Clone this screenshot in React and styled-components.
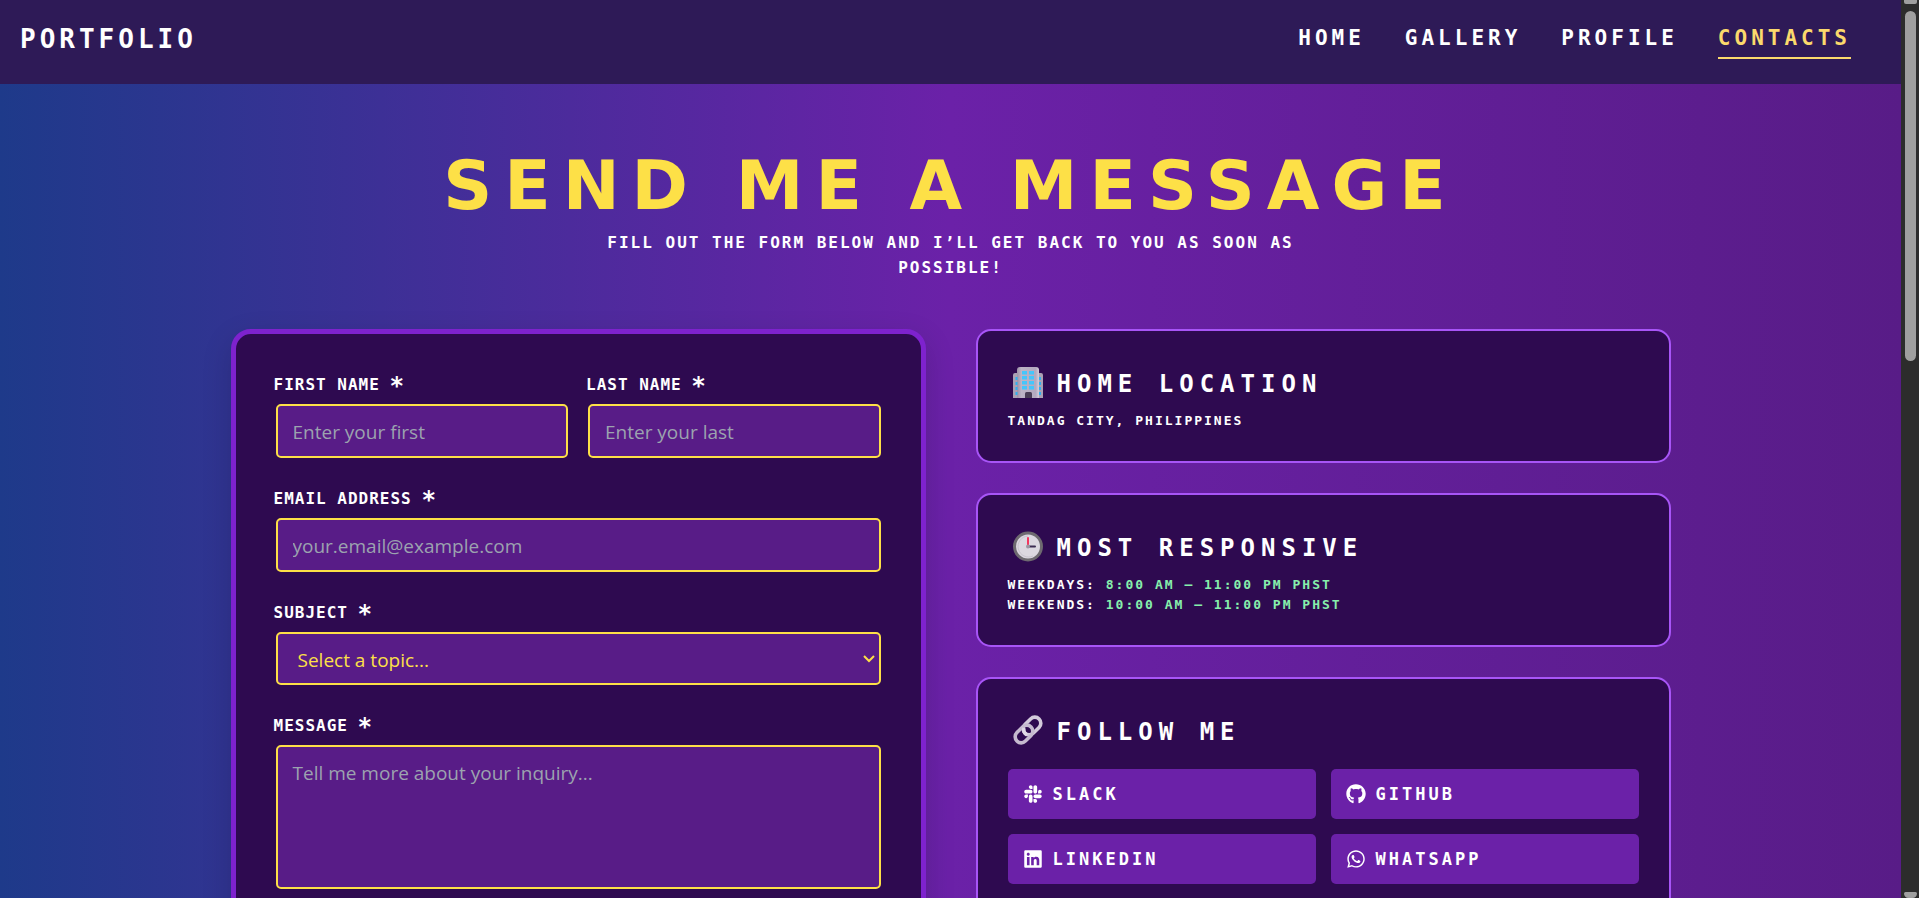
import React from "react";
import styled, { createGlobalStyle } from "styled-components";
import { FaSlack, FaGithub, FaLinkedin, FaWhatsapp } from "react-icons/fa";

const pixel = `"DejaVu Sans Mono", "Liberation Mono", monospace`;
const display = `"DejaVu Sans", "Liberation Sans", sans-serif`;
const body = `"Open Sans", "Noto Sans", sans-serif`;

const GlobalStyle = createGlobalStyle`
  *, *::before, *::after { box-sizing: border-box; }
  html, body { margin: 0; background: #2c2c2c; }
  h1, h2, p { margin: 0; }
`;

const Screen = styled.div`
  display: flex;
  height: 100vh;
  overflow: hidden;
  font-family: ${pixel};
  font-weight: 700;
  text-transform: uppercase;
  color: #fff;
`;

const Page = styled.div`
  flex: 1;
  min-width: 0;
  overflow: hidden;
  background: linear-gradient(to right, #1e3a8a, #6b21a8, #581c87);
`;

const Header = styled.header`
  display: flex;
  justify-content: space-between;
  align-items: flex-start;
  height: 84px;
  padding: 20px 50px 0 20px;
  background: #2e1a57;
`;

const Logo = styled.a`
  font-size: 26px;
  line-height: 38px;
  letter-spacing: 4px;
  color: #fff;
  text-decoration: none;
`;

const Nav = styled.nav`
  display: flex;
  gap: 40px;
`;

const NavLink = styled.a`
  padding-bottom: 1px;
  border-bottom: 2px solid ${(p) => (p.$active ? "#fbd96c" : "transparent")};
  font-size: 21px;
  line-height: 36px;
  letter-spacing: 4px;
  color: ${(p) => (p.$active ? "#fbd96c" : "#fff")};
  text-decoration: none;
`;

const Main = styled.main`
  max-width: 1480px;
  margin: 0 auto;
  padding: 62px 20px;
`;

const Intro = styled.section`
  display: flex;
  flex-direction: column;
  align-items: center;
  gap: 4px;
  margin-bottom: 49px;
  text-align: center;
`;

const Title = styled.h1`
  font-family: ${display};
  font-size: 68px;
  line-height: 80px;
  letter-spacing: 12px;
  color: #fde047;
`;

const Subtitle = styled.p`
  max-width: 720px;
  font-size: 16px;
  line-height: 25px;
  letter-spacing: 2px;
`;

const Columns = styled.div`
  display: grid;
  grid-template-columns: 1fr 1fr;
  gap: 50px;
`;

const Form = styled.form`
  display: flex;
  flex-direction: column;
  gap: 24px;
  padding: 36px 38px;
  border: 5px solid #7e22ce;
  border-radius: 20px;
  background: #2e0a50;
  box-shadow: 0 10px 30px rgba(0, 0, 0, 0.15);
`;

const NameRow = styled.div`
  display: grid;
  grid-template-columns: 1fr 1fr;
  gap: 16px;
`;

const Field = styled.div`
  display: flex;
  flex-direction: column;
  gap: 2px;
`;

const Label = styled.label`
  font-size: 16px;
  line-height: 30px;
  letter-spacing: 1px;
`;

const Required = styled.span`
  font-family: ${display};
  font-size: 24px;
  line-height: 1px;
  vertical-align: -4px;
`;

const controlStyle = `
  display: block;
  min-width: 0;
  margin: 2px;
  border: 2px solid #fde047;
  border-radius: 5px;
  background: #581c87;
  color: #fde047;
  font-family: ${body};
  font-size: 19px;
  outline: none;
  &::placeholder { color: #9ca3af; opacity: 1; }
`;

const Input = styled.input`
  ${controlStyle}
  height: 54px;
  padding: 2px 15px 0;
`;

const Textarea = styled.textarea`
  ${controlStyle}
  height: 144px;
  padding: 12px 15px;
  line-height: 28px;
  resize: none;
`;

const SelectWrap = styled.div`
  display: grid;
  align-items: center;
  & > * { grid-area: 1 / 1; }
`;

const Select = styled.select`
  ${controlStyle}
  height: 53px;
  padding: 2px 20px 0;
  appearance: none;
`;

const Chevron = styled.svg`
  width: 12px;
  height: 8px;
  margin-right: 8px;
  justify-self: end;
  pointer-events: none;
`;

const Aside = styled.aside`
  display: flex;
  flex-direction: column;
  gap: 30px;
`;

const Card = styled.section`
  padding: 30px;
  border: 2px solid #a855f7;
  border-radius: 15px;
  background: #2e0a50;
`;

const CardTitle = styled.h2`
  display: flex;
  align-items: center;
  gap: 14px;
  height: 46px;
  padding-left: 5px;
  font-size: 24px;
  letter-spacing: 6px;
`;

const CardIcon = styled.svg`
  flex: none;
  width: 30px;
  height: 34px;
`;

const CardText = styled.p`
  margin-top: 4px;
  font-size: 13px;
  line-height: 20px;
  letter-spacing: 2px;
`;

const Line = styled.span`
  display: block;
`;

const Hours = styled.span`
  color: #86efac;
`;

const Socials = styled.div`
  display: grid;
  grid-template-columns: 1fr 1fr;
  gap: 15px;
  margin-top: 14px;
`;

const SocialLink = styled.a`
  display: flex;
  align-items: center;
  gap: 10px;
  height: 50px;
  padding: 0 15px;
  border-radius: 5px;
  background: #6b21a8;
  color: #fff;
  font-size: 17px;
  letter-spacing: 3px;
  text-decoration: none;
  & > svg { flex: none; width: 20px; height: 20px; }
`;

const Scrollbar = styled.div`
  display: flex;
  flex-direction: column;
  align-items: center;
  justify-content: space-between;
  width: 18px;
  background: #2c2c2c;
`;

const Thumb = styled.div`
  width: 11px;
  height: 39%;
  margin: 7px 0 auto;
  border-radius: 6px;
  background: #9f9f9f;
`;

const ScrollArrow = styled.div`
  width: 13px;
  height: ${(p) => (p.$down ? 6 : 4)}px;
  border-radius: ${(p) => (p.$down ? "2px 2px 6px 6px" : "0 0 2px 2px")};
  background: #9f9f9f;
`;

function BuildingIcon() {
  const rows = [4, 9, 14, 19];
  return (
    <CardIcon viewBox="0 0 30 34" aria-hidden="true">
      <defs>
        <linearGradient id="wall" x1="0" x2="1">
          <stop offset="0" stopColor="#9c92a6" />
          <stop offset="0.2" stopColor="#bdb4c6" />
          <stop offset="0.85" stopColor="#b3a9bf" />
          <stop offset="1" stopColor="#d5cfdb" />
        </linearGradient>
      </defs>
      <path d="M0 8a2 2 0 0 1 2-2h3v25H0zM25 6h3a2 2 0 0 1 2 2v23h-5z" fill="#aaa1b4" />
      <path d="M4 3a3 3 0 0 1 3-3h16a3 3 0 0 1 3 3v28H4z" fill="url(#wall)" />
      {rows.map((y) => (
        <g key={y} fill="#44c6fb">
          <path d={`M9 ${y}h5v3.5H9zM16 ${y}h5v3.5h-5z`} />
          <path d={`M2.5 ${y + 6}h2v3h-2zM26 ${y + 6}h2v3h-2z`} fill="#2fb0ee" />
        </g>
      ))}
      <path d="M12 31v-4.500a1.500 1.500 0 0 1 1.500-1.500h4a1.500 1.500 0 0 1 1.500 1.500V31z" fill="#493d55" />
    </CardIcon>
  );
}

function ClockIcon() {
  return (
    <CardIcon viewBox="0 0 30 34" aria-hidden="true">
      <circle cx="15" cy="15.500" r="15" fill="#6e6a70" />
      <circle cx="15" cy="15.500" r="12" fill="#dcd8e0" />
      <path d="M15 5a10.500 10.500 0 1 0 5 20" fill="none" stroke="#c9c4ce" strokeWidth="1" />
      <path d="M15 15.500V7" stroke="#f4365f" strokeWidth="2" strokeLinecap="round" />
      <path d="M15 15.500h7" stroke="#3c2d52" strokeWidth="2" strokeLinecap="round" />
      <circle cx="15" cy="15.500" r="2" fill="#9c96a3" />
    </CardIcon>
  );
}

function LinkIcon() {
  return (
    <CardIcon viewBox="0 0 30 34" aria-hidden="true">
      <g fill="none" strokeWidth="3.600">
        <rect x="-10" y="-6" width="20" height="12" rx="6" transform="translate(19 11) rotate(-45)" stroke="#d3cadb" />
        <rect x="-10" y="-6" width="20" height="12" rx="6" transform="translate(11 19) rotate(-45)" stroke="#c5bacf" />
        <path d="M11 13a6 6 0 0 0 3 7" stroke="#e0d9e6" />
      </g>
    </CardIcon>
  );
}

const socials = [
  ["Slack", FaSlack],
  ["GitHub", FaGithub],
  ["LinkedIn", FaLinkedin],
  ["WhatsApp", FaWhatsapp],
];

const links = ["Home", "Gallery", "Profile", "Contacts"];

function FieldLabel({ htmlFor, children }) {
  return (
    <Label htmlFor={htmlFor}>
      {children} <Required>*</Required>
    </Label>
  );
}

export default function App() {
  return (
    <Screen>
      <GlobalStyle />
      <Page>
        <Header>
          <Logo href="#home">Portfolio</Logo>
          <Nav>
            {links.map((name) => (
              <NavLink key={name} href={`#${name.toLowerCase()}`} $active={name === "Contacts"}>
                {name}
              </NavLink>
            ))}
          </Nav>
        </Header>
        <Main>
          <Intro>
            <Title>Send me a message</Title>
            <Subtitle>Fill out the form below and I’ll get back to you as soon as possible!</Subtitle>
          </Intro>
          <Columns>
            <Form>
              <NameRow>
                <Field>
                  <FieldLabel htmlFor="first">First name</FieldLabel>
                  <Input id="first" type="text" placeholder="Enter your first" />
                </Field>
                <Field>
                  <FieldLabel htmlFor="last">Last name</FieldLabel>
                  <Input id="last" type="text" placeholder="Enter your last" />
                </Field>
              </NameRow>
              <Field>
                <FieldLabel htmlFor="email">Email address</FieldLabel>
                <Input id="email" type="email" placeholder="your.email@example.com" />
              </Field>
              <Field>
                <FieldLabel htmlFor="subject">Subject</FieldLabel>
                <SelectWrap>
                  <Select id="subject" defaultValue="">
                    <option value="">Select a topic...</option>
                  </Select>
                  <Chevron viewBox="0 0 12 8" aria-hidden="true">
                    <path d="M1 1l5 5 5-5" fill="none" stroke="#fde047" strokeWidth="2" />
                  </Chevron>
                </SelectWrap>
              </Field>
              <Field>
                <FieldLabel htmlFor="message">Message</FieldLabel>
                <Textarea id="message" placeholder="Tell me more about your inquiry..." />
              </Field>
            </Form>
            <Aside>
              <Card>
                <CardTitle><BuildingIcon />Home location</CardTitle>
                <CardText>Tandag City, Philippines</CardText>
              </Card>
              <Card>
                <CardTitle><ClockIcon />Most responsive</CardTitle>
                <CardText>
                  <Line>Weekdays: <Hours>8:00 AM – 11:00 PM PHST</Hours></Line>
                  <Line>Weekends: <Hours>10:00 AM – 11:00 PM PHST</Hours></Line>
                </CardText>
              </Card>
              <Card>
                <CardTitle><LinkIcon />Follow me</CardTitle>
                <Socials>
                  {socials.map(([name, Icon]) => (
                    <SocialLink key={name} href={`#${name.toLowerCase()}`}>
                      <Icon aria-hidden="true" />
                      {name}
                    </SocialLink>
                  ))}
                </Socials>
              </Card>
            </Aside>
          </Columns>
        </Main>
      </Page>
      <Scrollbar aria-hidden="true">
        <ScrollArrow />
        <Thumb />
        <ScrollArrow $down />
      </Scrollbar>
    </Screen>
  );
}
